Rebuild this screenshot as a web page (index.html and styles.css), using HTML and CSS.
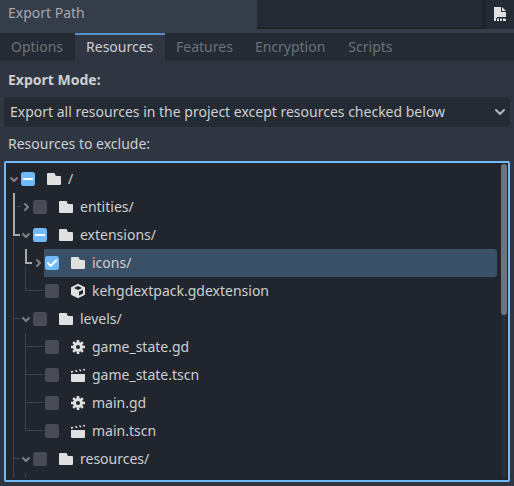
FILE: index.html
```html
<!DOCTYPE html>
<html lang="en">
<head>
<meta charset="utf-8">
<title>Export</title>
<link rel="stylesheet" href="styles.css">
</head>
<body>
<svg class="defs" width="0" height="0">
  <symbol id="folder" viewBox="0 0 16 16"><path d="M2 2a1 1 0 0 0-1 1v10a1 1 0 0 0 1 1h12a1 1 0 0 0 1-1V6a1 1 0 0 0-1-1h-3a2 2 0 0 1-2-2 1 1 0 0 0-1-1z"/></symbol>
  <symbol id="gear" viewBox="0 0 16 16"><g class="teeth"><path d="M8 1v14M1 8h14M3.200 3.200l9.600 9.600M12.800 3.200l-9.600 9.600"/></g><circle class="hub" cx="8" cy="8" r="3.500"/><circle class="hole" cx="8" cy="8" r="2"/></symbol>
  <symbol id="scene" viewBox="0 0 16 16"><path d="M1 7h14v7a1 1 0 0 1-1 1H2a1 1 0 0 1-1-1zM1 3.900l1.500-.2 1.200 1.600L1 5.700zM4.800 3.200l1.700-.2 1.200 1.700-1.700.3zM8.800 2.600l1.700-.2 1.200 1.700-1.700.3zM12.800 2l1.900-.3.300 1.900-1 .1z"/></symbol>
  <symbol id="box" viewBox="0 0 16 16"><path fill-rule="evenodd" d="M8 .8L1 4.300v7.400l7 3.500 7-3.500V4.300zM8 3.100L12 5.100 8 7.100 4 5.100zM9 8.800l4-2v3.700l-4 2z"/></symbol>
  <symbol id="down" viewBox="0 0 12 12"><path class="stroke" d="M3 5l3 3 3-3"/></symbol>
  <symbol id="right" viewBox="0 0 12 12"><path class="stroke" d="M5 3l3 3-3 3"/></symbol>
</svg>

<div class="path-row">
  <div class="path-label">Export Path</div>
  <div class="path-field"></div>
  <div class="browse"><svg width="16" height="16" viewBox="0 0 16 16"><path d="M2 1h7v5h5v5H5v1H4v3H2zM10 1l4 4h-4z"/><path class="dots" d="M5 12h2v1H5zM8 12h2v1H8zM11 12h2v1h-2z"/><path d="M5 13h2v2H5zM8 13h2v2H8zM11 13h3v2h-3z"/></svg></div>
</div>
<div class="tabs">
  <div class="tab">Options</div>
  <div class="tab active">Resources</div>
  <div class="tab">Features</div>
  <div class="tab">Encryption</div>
  <div class="tab">Scripts</div>
</div>
<div class="content">
  <div class="heading">Export Mode:</div>
  <div class="select"><span>Export all resources in the project except resources checked below</span><svg width="16" height="16" viewBox="0 0 16 16"><path d="M4 6l4 4 4-4"/></svg></div>
  <div class="caption">Resources to exclude:</div>
  <div class="tree">
    <div class="row"><svg class="arrow"><use href="#down"/></svg><i class="check on"><b></b></i><svg class="icon"><use href="#folder"/></svg><span>/</span></div>
    <div class="row l1"><svg class="arrow"><use href="#right"/></svg><i class="check"></i><svg class="icon"><use href="#folder"/></svg><span>entities/</span></div>
    <div class="row l1"><svg class="arrow"><use href="#down"/></svg><i class="check on"><b></b></i><svg class="icon"><use href="#folder"/></svg><span>extensions/</span></div>
    <div class="row l2 selected"><svg class="arrow"><use href="#right"/></svg><i class="check on"><svg width="14" height="14" viewBox="0 0 14 14"><path d="M3 7.300L5.700 10 11.300 4.300"/></svg></i><svg class="icon"><use href="#folder"/></svg><span>icons/</span></div>
    <div class="row l2"><svg class="arrow"></svg><i class="check"></i><svg class="icon"><use href="#box"/></svg><span>kehgdextpack.gdextension</span></div>
    <div class="row l1"><svg class="arrow"><use href="#down"/></svg><i class="check"></i><svg class="icon"><use href="#folder"/></svg><span>levels/</span></div>
    <div class="row l2"><svg class="arrow"></svg><i class="check"></i><svg class="icon"><use href="#gear"/></svg><span>game_state.gd</span></div>
    <div class="row l2"><svg class="arrow"></svg><i class="check"></i><svg class="icon"><use href="#scene"/></svg><span>game_state.tscn</span></div>
    <div class="row l2"><svg class="arrow"></svg><i class="check"></i><svg class="icon"><use href="#gear"/></svg><span>main.gd</span></div>
    <div class="row l2"><svg class="arrow"></svg><i class="check"></i><svg class="icon"><use href="#scene"/></svg><span>main.tscn</span></div>
    <div class="row l1"><svg class="arrow"><use href="#down"/></svg><i class="check"></i><svg class="icon"><use href="#folder"/></svg><span>resources/</span></div>
    <svg class="guides" width="60" height="317" viewBox="6 163 60 317">
      <path class="thin" d="M13.500 238V478M17 206.500h4M14 318.500h6M14 458.500h6M25.500 266v24.500H44M25.500 333v97.500H44M26 346.500h18M26 374.500h18M26 402.500h18M25.500 473v5"/>
      <path class="thick" d="M14 193v42h6M26 249v14h6"/>
    </svg>
    <div class="scroll"><div class="thumb"></div></div>
  </div>
</div>
</body>
</html>
```
FILE: styles.css
```css
* { box-sizing: border-box; }
body {
  margin: 0;
  width: 514px;
  height: 486px;
  overflow: hidden;
  background: #363d4a;
  color: #cdcfd2;
  font: 14px/20px "Noto Sans", sans-serif;
  display: flex;
  flex-direction: column;
}
svg { display: block; flex: none; }
.defs { position: absolute; }
.path-row { display: flex; height: 33px; flex: none; }
.path-label { width: 257px; padding: 3px 8px; color: #a5a8ad; }
.path-field { width: 225px; height: 29px; background: #252b34; border-bottom: 2px solid #1e2229; }
.browse { width: 32px; height: 29px; background: #252b34; border-left: 4px solid #1f242c; padding: 6px 0 0 6px; }
.browse svg { fill: #e0e0e0; }
.browse .dots { fill: #85888d; }
.tabs { display: flex; height: 28px; flex: none; background: #252b34; }
.tab { padding: 4px 12px 0 13px; color: #6c7178; white-space: nowrap; }
.tab:first-child { padding: 4px 12px 0 11px; }
.tab.active { background: #303641; border-top: 2px solid #5792cd; color: #cdcfd2; padding: 2px 12px 0 11px; width: 90px; }
.tab.active + .tab { padding-left: 11px; }
.tab:nth-child(4) { padding-left: 10px; }
.tab:nth-child(5) { padding-left: 11px; }
.content { flex: 1; background: #303641; padding: 9px 4px 4px; }
.heading { font-weight: 700; padding-left: 4px; height: 27px; }
.select { display: flex; justify-content: space-between; align-items: center; height: 30px; padding: 0 2px 0 6px; background: #252b34; border-radius: 3px; }
.select path { fill: none; stroke: #b4b7bb; stroke-width: 2; stroke-linecap: round; stroke-linejoin: round; }
.caption { padding: 7px 4px 0; height: 34px; }
.tree { position: relative; width: 506px; height: 321px; padding: 2px 0 0; border: 2px solid #70bafa; background: #21262e; overflow: hidden; border-radius: 2px; }
.row { display: flex; align-items: center; height: 28px; margin-right: 11px; padding-left: 2px; white-space: nowrap; }
.l1 { padding-left: 14px; }
.l2 { padding-left: 26px; }
.selected { background: linear-gradient(#395067, #395067) 38px 0 no-repeat; border-radius: 3px; }
.arrow { width: 12px; height: 12px; margin-right: 1px; }
.stroke { fill: none; stroke: #7d8085; stroke-width: 2; stroke-linecap: round; stroke-linejoin: round; }
.check { width: 14px; height: 14px; flex: none; border-radius: 2.500px; background: #484b53; display: flex; align-items: center; justify-content: center; }
.check.on { background: #70bafa; }
.check b { width: 10px; height: 2px; background: #fff; }
.check path { fill: none; stroke: #fff; stroke-width: 2; stroke-linecap: round; stroke-linejoin: round; }
.icon { width: 16px; height: 16px; margin: 0 6px 0 11px; fill: #e0e0e0; }
.teeth { stroke: #e0e0e0; stroke-width: 2.600; }
.hub { fill: none; stroke: #e0e0e0; stroke-width: 3; }
.hole { fill: #21262e; }
.guides { position: absolute; left: 0; top: 0; fill: none; }
.thin { stroke: #3f434b; }
.thick { stroke: #a6a8ab; stroke-width: 2; }
.scroll { position: absolute; right: 2px; top: 1px; width: 4px; height: 314px; background: #2b3038; border-radius: 2px; }
.thumb { width: 6px; height: 151px; margin-left: -1px; border-radius: 3px; background: #6f7277; }
```
